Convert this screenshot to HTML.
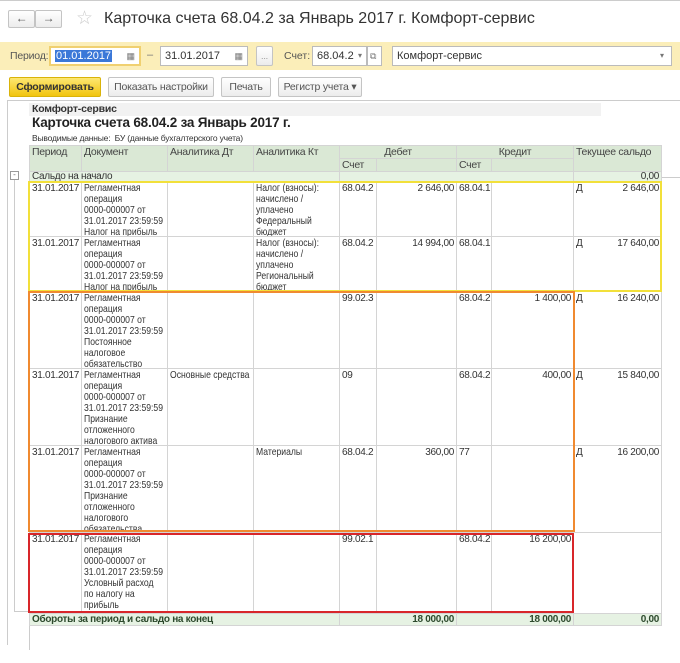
<!DOCTYPE html>
<html><head><meta charset="utf-8">
<style>
*{box-sizing:border-box;margin:0;padding:0}
body{width:680px;height:663px;background:#fff;font-family:"Liberation Sans",sans-serif;color:#333;position:relative;overflow:hidden}
.a{position:absolute}
.inp{position:absolute;height:20px;border:1px solid #bbb;background:#fff;font-size:11px;line-height:18px;padding-left:4px;color:#333;white-space:nowrap}
.btn{position:absolute;height:20px;border:1px solid #c4c4c4;border-radius:2px;background:linear-gradient(#fff,#ececec);font-size:10.5px;line-height:18px;text-align:center;color:#555;letter-spacing:-0.2px;white-space:nowrap}
table{position:absolute;left:29px;top:145px;width:632px;border-collapse:collapse;table-layout:fixed;font-size:10px;line-height:11px;letter-spacing:-0.3px}
td{border:1px solid #d4d4d4;vertical-align:top;padding:1px 2px 0 2px;overflow:hidden;white-space:nowrap}
td div{overflow:hidden}
td div.n{transform:scaleX(.82);transform-origin:0 0;width:122%;letter-spacing:0;font-size:10.5px}
.h{background:#dae8d5;color:#444;font-size:10.5px}
.g{background:#e6f2e3}
.r{text-align:right}
.box{position:absolute;border:2px solid}
</style></head><body>
<div class="a" style="left:0;top:0;width:680px;height:1px;background:#ccc"></div>
<div class="btn" style="left:8px;top:10px;width:27px;height:18px;font-size:12px;line-height:15px">&#8592;</div>
<div class="btn" style="left:35px;top:10px;width:27px;height:18px;font-size:12px;line-height:15px">&#8594;</div>
<div class="a" style="left:76px;top:7px;font-size:19px;color:#ccc">&#9734;</div>
<div class="a" style="left:104px;top:10px;font-size:16px;color:#333">Карточка счета 68.04.2 за Январь 2017 г. Комфорт-сервис</div>

<div class="a" style="left:0;top:42px;width:680px;height:28px;background:#fbeeb9"></div>
<div class="a" style="left:10px;top:50px;font-size:10.5px;color:#555;letter-spacing:-0.2px">Период:</div>
<div class="inp" style="left:49px;top:46px;width:92px;border:2px solid #f0d070;line-height:16px"><span style="background:#3b78d8;color:#fff;padding:0 1px">01.01.2017</span><span style="position:absolute;right:4px;color:#777;font-size:9px">&#9638;</span></div>
<div class="a" style="left:147px;top:49px;font-size:11px;color:#777">–</div>
<div class="inp" style="left:160px;top:46px;width:88px">31.01.2017<span style="position:absolute;right:4px;color:#777;font-size:9px">&#9638;</span></div>
<div class="btn" style="left:256px;top:46px;width:17px;color:#999;font-size:9px">...</div>
<div class="a" style="left:284px;top:50px;font-size:10.5px;color:#555">Счет:</div>
<div class="inp" style="left:312px;top:46px;width:55px">68.04.2<span style="position:absolute;right:4px;color:#777;font-size:8px">&#9662;</span></div>
<div class="inp" style="left:367px;top:46px;width:15px;color:#777;font-size:9px;padding-left:2px">&#10697;</div>
<div class="inp" style="left:392px;top:46px;width:280px">Комфорт-сервис<span style="position:absolute;right:7px;color:#777;font-size:8px">&#9662;</span></div>

<div class="btn" style="left:9px;top:77px;width:92px;background:linear-gradient(#fde772,#f1c40f);border-color:#d9b30a;color:#333;font-weight:bold">Сформировать</div>
<div class="btn" style="left:108px;top:77px;width:106px">Показать настройки</div>
<div class="btn" style="left:221px;top:77px;width:50px">Печать</div>
<div class="btn" style="left:278px;top:77px;width:84px">Регистр учета &#9662;</div>

<div class="a" style="left:7px;top:100px;width:673px;height:1px;background:#ccc"></div>
<div class="a" style="left:7px;top:100px;width:1px;height:545px;background:#ccc"></div>
<div class="a" style="left:29px;top:103px;width:572px;height:13px;background:#f2f2f2"></div>
<div class="a" style="left:32px;top:103px;font-size:10.5px;font-weight:bold;letter-spacing:-0.2px">Комфорт-сервис</div>
<div class="a" style="left:32px;top:115px;font-size:13.5px;font-weight:bold;color:#222;letter-spacing:-0.2px">Карточка счета 68.04.2 за Январь 2017 г.</div>
<div class="a" style="left:32px;top:133px;font-size:8.5px;letter-spacing:-0.2px">Выводимые данные:&nbsp; БУ (данные бухгалтерского учета)</div>
<div class="a" style="left:10px;top:171px;width:9px;height:9px;border:1px solid #999;font-size:8px;line-height:6px;text-align:center;color:#666">-</div>
<div class="a" style="left:14px;top:180px;width:1px;height:432px;background:#ccc"></div>
<div class="a" style="left:661px;top:177px;width:19px;height:1px;background:#ccc"></div>
<div class="a" style="left:29px;top:613px;width:1px;height:37px;background:#ccc"></div>
<div class="a" style="left:14px;top:611px;width:15px;height:1px;background:#ccc"></div>

<table>
<colgroup><col style="width:52px"><col style="width:86px"><col style="width:86px"><col style="width:86px"><col style="width:37px"><col style="width:80px"><col style="width:35px"><col style="width:82px"><col style="width:88px"></colgroup>
<tr class="h" style="height:13px"><td rowspan="2">Период</td><td rowspan="2">Документ</td><td rowspan="2">Аналитика Дт</td><td rowspan="2">Аналитика Кт</td><td colspan="2" style="text-align:center">Дебет</td><td colspan="2" style="text-align:center">Кредит</td><td rowspan="2">Текущее сальдо</td></tr>
<tr class="h" style="height:12px"><td>Счет</td><td></td><td>Счет</td><td></td></tr>
<tr class="g" style="height:10px"><td colspan="4" style="padding-top:0;line-height:9px">Сальдо на начало</td><td colspan="4"></td><td class="r" style="padding-top:0;line-height:9px">0,00</td></tr>
<tr><td><div style="height:53px">31.01.2017</div></td><td><div class="n" style="height:53px">Регламентная<br>операция<br>0000-000007 от<br>31.01.2017 23:59:59<br>Налог на прибыль</div></td><td></td><td><div class="n" style="height:53px">Налог (взносы):<br>начислено /<br>уплачено<br>Федеральный<br>бюджет</div></td><td>68.04.2</td><td class="r">2 646,00</td><td>68.04.1</td><td></td><td>Д<span style="float:right">2 646,00</span></td></tr>
<tr><td><div style="height:53px">31.01.2017</div></td><td><div class="n" style="height:53px">Регламентная<br>операция<br>0000-000007 от<br>31.01.2017 23:59:59<br>Налог на прибыль</div></td><td></td><td><div class="n" style="height:53px">Налог (взносы):<br>начислено /<br>уплачено<br>Региональный<br>бюджет</div></td><td>68.04.2</td><td class="r">14 994,00</td><td>68.04.1</td><td></td><td>Д<span style="float:right">17 640,00</span></td></tr>
<tr><td><div style="height:75px">31.01.2017</div></td><td><div class="n" style="height:75px">Регламентная<br>операция<br>0000-000007 от<br>31.01.2017 23:59:59<br>Постоянное<br>налоговое<br>обязательство</div></td><td></td><td></td><td>99.02.3</td><td></td><td>68.04.2</td><td class="r">1 400,00</td><td>Д<span style="float:right">16 240,00</span></td></tr>
<tr><td><div style="height:75px">31.01.2017</div></td><td><div class="n" style="height:75px">Регламентная<br>операция<br>0000-000007 от<br>31.01.2017 23:59:59<br>Признание<br>отложенного<br>налогового актива</div></td><td><div class="n">Основные средства</div></td><td></td><td>09</td><td></td><td>68.04.2</td><td class="r">400,00</td><td>Д<span style="float:right">15 840,00</span></td></tr>
<tr><td><div style="height:85px">31.01.2017</div></td><td><div class="n" style="height:85px">Регламентная<br>операция<br>0000-000007 от<br>31.01.2017 23:59:59<br>Признание<br>отложенного<br>налогового<br>обязательства</div></td><td></td><td><div class="n">Материалы</div></td><td>68.04.2</td><td class="r">360,00</td><td>77</td><td></td><td>Д<span style="float:right">16 200,00</span></td></tr>
<tr><td><div style="height:79px">31.01.2017</div></td><td><div class="n" style="height:79px">Регламентная<br>операция<br>0000-000007 от<br>31.01.2017 23:59:59<br>Условный расход<br>по налогу на<br>прибыль</div></td><td></td><td></td><td>99.02.1</td><td></td><td>68.04.2</td><td class="r">16 200,00</td><td></td></tr>
<tr class="g" style="height:12px;font-weight:bold;color:#2d4a2d"><td colspan="4" style="padding-top:0;line-height:11px">Обороты за период и сальдо на конец</td><td colspan="2" class="r" style="padding-top:0;line-height:11px">18 000,00</td><td colspan="2" class="r" style="padding-top:0;line-height:11px">18 000,00</td><td class="r" style="padding-top:0;line-height:11px">0,00</td></tr>
</table>

<div class="box" style="left:28px;top:181px;width:634px;height:111px;border-color:#f2e03a"></div>
<div class="box" style="left:28px;top:291px;width:547px;height:241px;border-color:#f08a30"></div>
<div class="box" style="left:28px;top:533px;width:546px;height:80px;border-color:#d8262a"></div>
</body></html>
